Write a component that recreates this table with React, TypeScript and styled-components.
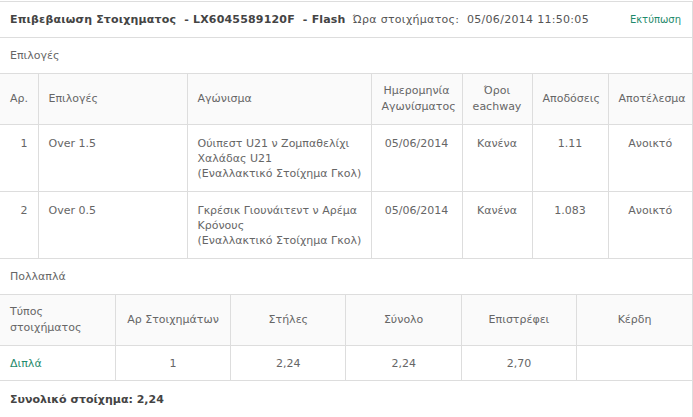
import React from 'react';
import styled, { createGlobalStyle } from 'styled-components';

const GlobalStyle = createGlobalStyle`
  body {
    margin: 0;
    background: #ffffff;
    font-family: 'DejaVu Sans', Verdana, sans-serif;
  }
`;

const Panel = styled.div`
  width: 692px;
  margin-top: 1px;
  border-top: 1px solid #dddddd;
  border-right: 1px solid #dddddd;
  border-bottom: 1px solid #dddddd;
  color: #666666;
  font-size: 11px;
`;

const Header = styled.div`
  height: 35px;
  display: flex;
  align-items: center;
  padding: 0 11px 0 10px;
  border-bottom: 1px solid #dddddd;
`;

const Title = styled.span`
  font-weight: bold;
  color: #444444;
  white-space: pre;
  letter-spacing: 0.18px;
`;

const BetTime = styled.span`
  margin-left: 7px;
  color: #555555;
  white-space: pre;
  letter-spacing: 0.3px;
`;

const PrintLink = styled.a`
  margin-left: auto;
  font-size: 10px;
  color: #1f8a6c;
  text-decoration: none;
  cursor: pointer;
`;

const SectionLabel = styled.div`
  height: 35px;
  display: flex;
  align-items: center;
  padding-left: 10px;
  border-bottom: 1px solid #dddddd;
`;

const Table = styled.table`
  width: 692px;
  border-collapse: collapse;
  table-layout: fixed;
`;

const Th = styled.th<{ $align?: 'left' | 'center' | 'right' }>`
  height: 50px;
  padding: 0 10px;
  background: #fafafa;
  font-weight: normal;
  line-height: 16px;
  text-align: ${({ $align }) => $align || 'center'};
  vertical-align: middle;
  border-bottom: 1px solid #dddddd;
  border-left: 1px solid #dddddd;
  &:first-child {
    border-left: none;
  }
`;

const Td = styled.td<{ $align?: 'left' | 'center' | 'right'; $tight?: boolean }>`
  padding: 11px ${({ $tight }) => ($tight ? '2px' : '10px')} 10px 10px;
  line-height: 15px;
  text-align: ${({ $align }) => $align || 'center'};
  vertical-align: top;
  border-bottom: 1px solid #dddddd;
  border-left: 1px solid #dddddd;
  &:first-child {
    border-left: none;
  }
`;

const MultiTd = styled(Td)`
  height: 34px;
  padding: 0 10px;
  vertical-align: middle;
`;

const TypeLink = styled.a`
  color: #1f8a6c;
  text-decoration: none;
`;

const Total = styled.div`
  height: 36px;
  display: flex;
  align-items: center;
  padding-left: 10px;
  font-weight: bold;
  color: #444444;
`;

type Selection = {
  no: number;
  pick: string;
  event: string[];
  date: string;
  eachway: string;
  odds: string;
  result: string;
};

const selections: Selection[] = [
  {
    no: 1,
    pick: 'Over 1.5',
    event: ['Ούιπεστ U21 ν Ζομπαθελίχι Χαλάδας U21', '(Εναλλακτικό Στοίχημα Γκολ)'],
    date: '05/06/2014',
    eachway: 'Κανένα',
    odds: '1.11',
    result: 'Ανοικτό',
  },
  {
    no: 2,
    pick: 'Over 0.5',
    event: ['Γκρέσικ Γιουνάιτεντ ν Αρέμα Κρόνους', '(Εναλλακτικό Στοίχημα Γκολ)'],
    date: '05/06/2014',
    eachway: 'Κανένα',
    odds: '1.083',
    result: 'Ανοικτό',
  },
];

const selectionCols = [38, 149, 184, 91, 70, 76, 84];

export default function App() {
  return (
    <>
      <GlobalStyle />
      <Panel>
        <Header>
          <Title>Επιβεβαιωση Στοιχηματος  - LX6045589120F  - Flash</Title>
          <BetTime>Ώρα στοιχήματος:  05/06/2014 11:50:05</BetTime>
          <PrintLink>Εκτύπωση</PrintLink>
        </Header>

        <SectionLabel>Επιλογές</SectionLabel>
        <Table>
          <colgroup>
            {selectionCols.map((w, i) => (
              <col key={i} style={{ width: w }} />
            ))}
          </colgroup>
          <thead>
            <tr>
              <Th $align="left">Αρ.</Th>
              <Th $align="left">Επιλογές</Th>
              <Th $align="left">Αγώνισμα</Th>
              <Th>Ημερομηνία Αγωνίσματος</Th>
              <Th>Όροι eachway</Th>
              <Th>Αποδόσεις</Th>
              <Th>Αποτέλεσμα</Th>
            </tr>
          </thead>
          <tbody>
            {selections.map((s) => (
              <tr key={s.no}>
                <Td $align="right">{s.no}</Td>
                <Td $align="left">{s.pick}</Td>
                <Td $align="left" $tight>
                  {s.event[0]}
                  <br />
                  {s.event[1]}
                </Td>
                <Td>{s.date}</Td>
                <Td>{s.eachway}</Td>
                <Td>{s.odds}</Td>
                <Td>{s.result}</Td>
              </tr>
            ))}
          </tbody>
        </Table>

        <SectionLabel>Πολλαπλά</SectionLabel>
        <Table>
          <thead>
            <tr>
              <Th $align="left">Τύπος στοιχήματος</Th>
              <Th>Αρ Στοιχημάτων</Th>
              <Th>Στήλες</Th>
              <Th>Σύνολο</Th>
              <Th>Επιστρέφει</Th>
              <Th>Κέρδη</Th>
            </tr>
          </thead>
          <tbody>
            <tr>
              <MultiTd $align="left">
                <TypeLink>Διπλά</TypeLink>
              </MultiTd>
              <MultiTd>1</MultiTd>
              <MultiTd>2,24</MultiTd>
              <MultiTd>2,24</MultiTd>
              <MultiTd>2,70</MultiTd>
              <MultiTd></MultiTd>
            </tr>
          </tbody>
        </Table>

        <Total>Συνολικό στοίχημα: 2,24</Total>
      </Panel>
    </>
  );
}
